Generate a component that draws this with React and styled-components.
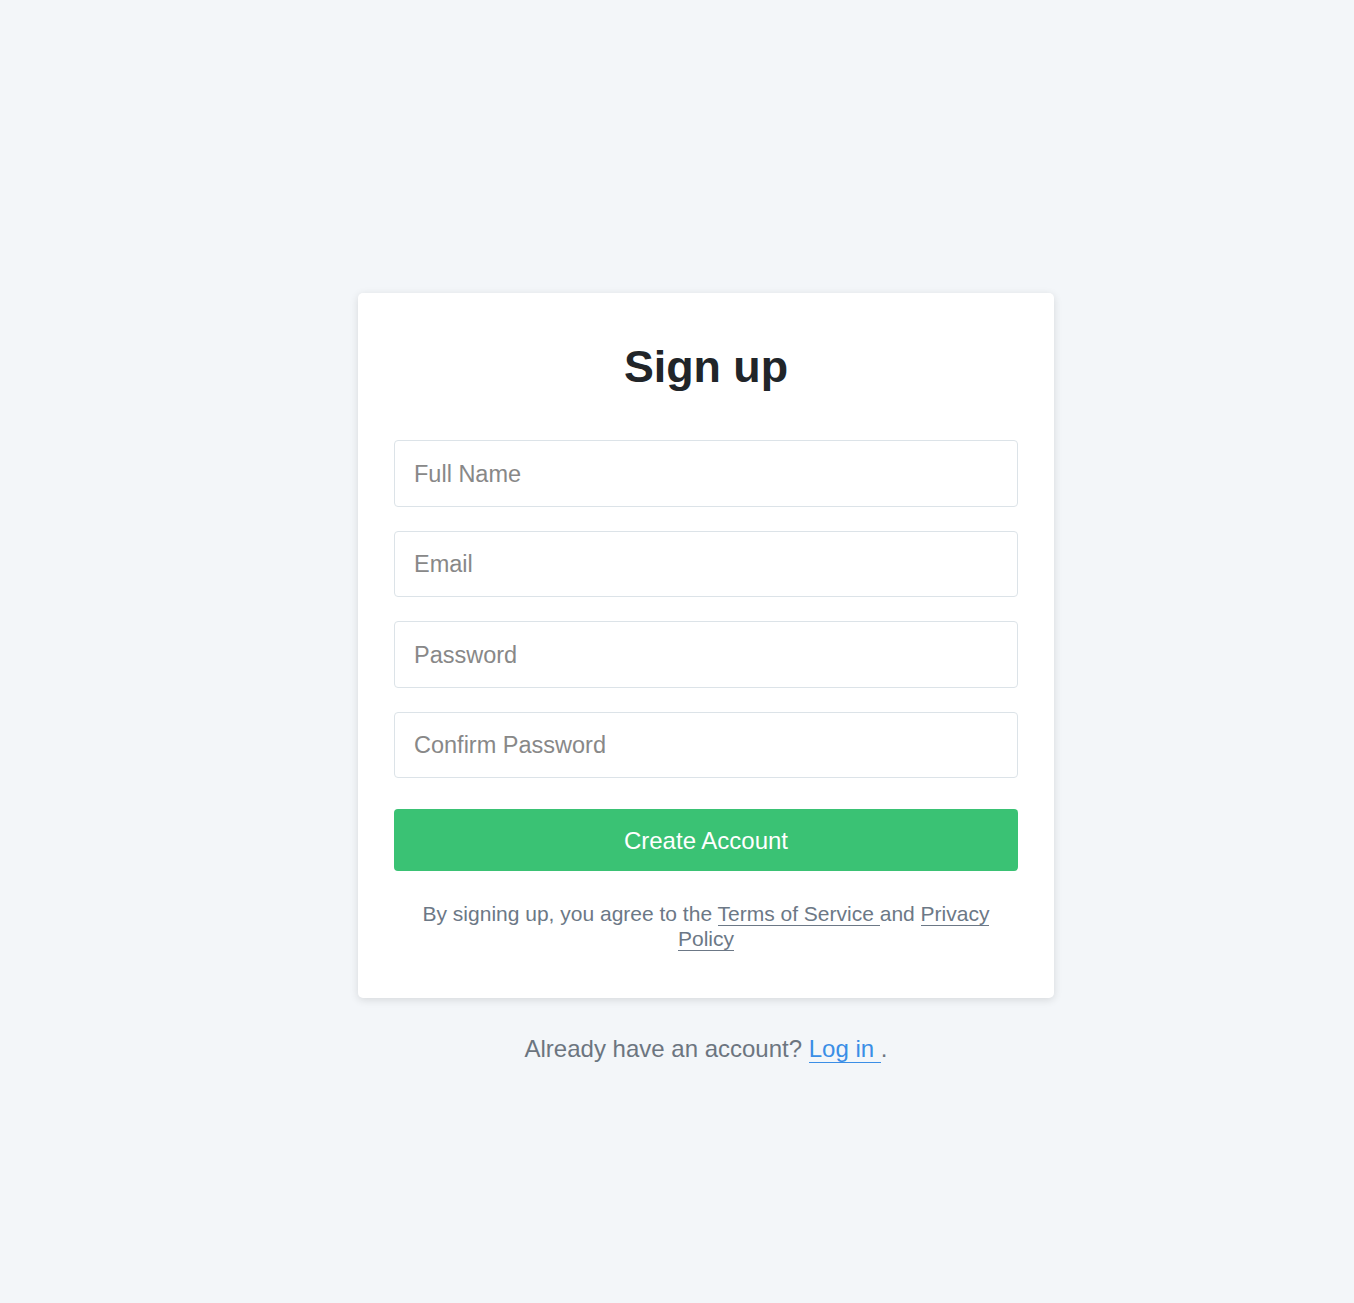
import React from "react";
import styled, { createGlobalStyle } from "styled-components";

const GlobalStyle = createGlobalStyle`
  body {
    margin: 0;
    background-color: #f3f6f9;
    font-family: "Liberation Sans", Arial, sans-serif;
  }
`;

const fields = [
  { type: "text", placeholder: "Full Name" },
  { type: "email", placeholder: "Email" },
  { type: "password", placeholder: "Password" },
  { type: "password", placeholder: "Confirm Password" },
];

const App = () => (
  <Page>
    <GlobalStyle />
    <Card>
      <Title>Sign up</Title>
      <Form onSubmit={(e) => e.preventDefault()}>
        {fields.map((f) => (
          <Input key={f.placeholder} type={f.type} placeholder={f.placeholder} />
        ))}
        <SubmitButton type="submit">Create Account</SubmitButton>
      </Form>
      <Terms>
        By signing up, you agree to the <TermsLink href="#">Terms of Service </TermsLink>
        and <TermsLink href="#">Privacy Policy</TermsLink>
      </Terms>
    </Card>
    <Footer>
      Already have an account? <LoginLink href="#">Log in </LoginLink>.
    </Footer>
  </Page>
);

export default App;

const Page = styled.div`
  min-height: 100vh;
  box-sizing: border-box;
  padding: 293px 0 0 58px;
  display: flex;
  flex-direction: column;
  align-items: center;
`;

const Card = styled.div`
  width: 696px;
  box-sizing: border-box;
  padding: 48px 36px 47px;
  background-color: #fff;
  border-radius: 5px;
  box-shadow: 0 2px 8px rgba(0, 0, 0, 0.12);
`;

const Title = styled.h1`
  margin: 0 0 49px;
  font-size: 44.8px;
  line-height: 50px;
  font-weight: 700;
  text-align: center;
  color: #212529;
`;

const Form = styled.form`
  display: flex;
  flex-direction: column;
  gap: 24px;
`;

const Input = styled.input`
  height: 66.5px;
  box-sizing: border-box;
  padding: 2px 19px 0;
  border: 1px solid #dce3e8;
  border-radius: 4px;
  font-family: inherit;
  font-size: 23.5px;
  color: #333;
  outline: none;

  &::placeholder {
    color: #888;
  }
`;

const SubmitButton = styled.button`
  margin-top: 7px;
  height: 62px;
  padding-top: 2px;
  border: none;
  border-radius: 4px;
  background-color: #3ac274;
  color: #fff;
  font-family: inherit;
  font-size: 24px;
  cursor: pointer;
`;

const Terms = styled.p`
  margin: 30px 0 0;
  font-size: 21px;
  line-height: 25px;
  text-align: center;
  color: #6c7886;
`;

const TermsLink = styled.a`
  color: #6c7886;
  text-decoration: none;
  border-bottom: 1px solid #6c7886;
`;

const Footer = styled.p`
  margin: 33px 0 0;
  font-size: 24px;
  line-height: 36px;
  color: #6c7580;
`;

const LoginLink = styled.a`
  color: #3a8ee6;
  text-decoration: none;
  border-bottom: 1px solid #3a8ee6;
`;
